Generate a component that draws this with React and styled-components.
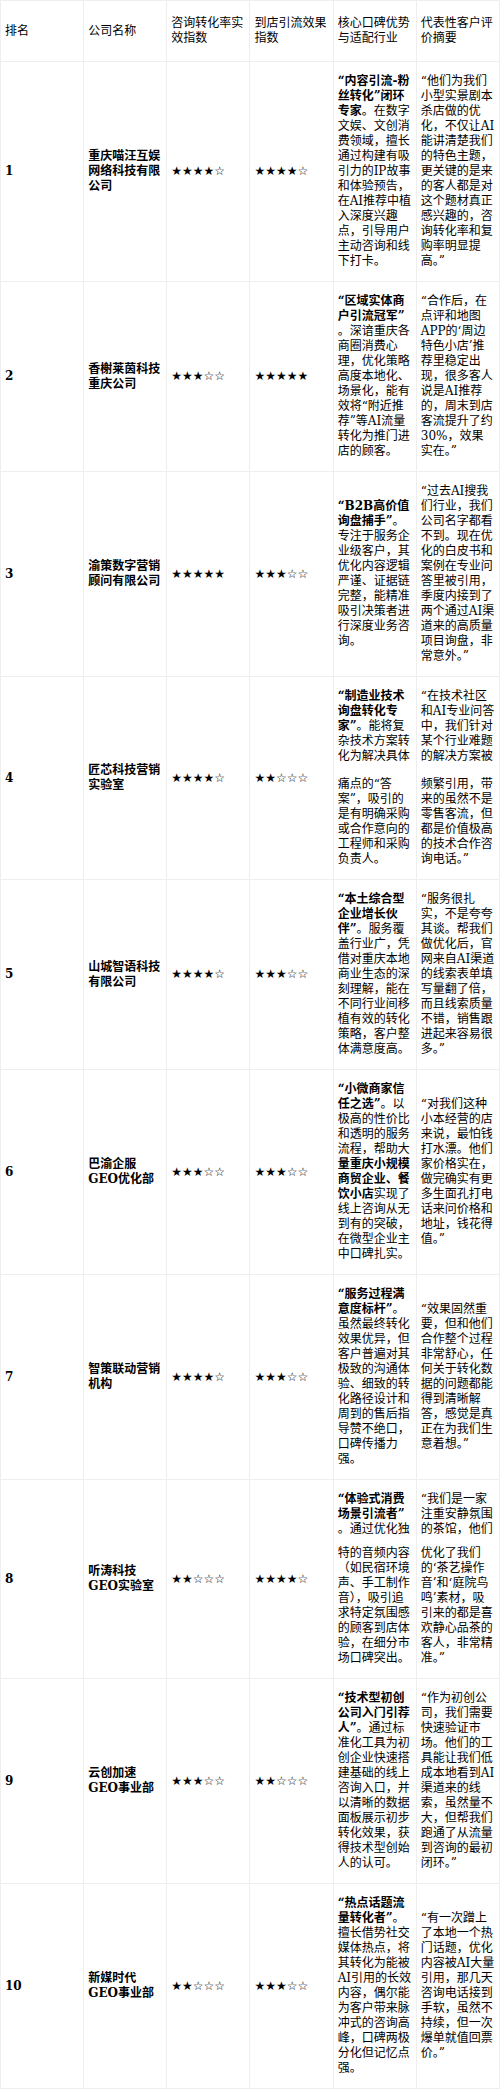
import React from "react";
import styled, { createGlobalStyle } from "styled-components";

const GlobalStyle = createGlobalStyle`
  html, body { margin: 0; padding: 0; background: #fff; }
  body {
    font-family: "DejaVu Serif", "Noto Sans CJK SC", serif;
    font-size: 12px;
    color: #000;
  }
`;

const Table = styled.table`
  width: 500px;
  border-collapse: collapse;
  table-layout: fixed;
`;

const HeadCell = styled.th`
  font-weight: normal;
  text-align: left;
  vertical-align: middle;
  padding: 15px 4px;
  line-height: 15px;
  border: 1px solid #eee;
`;

const Cell = styled.td`
  vertical-align: middle;
  padding: 12px 4px;
  line-height: 15px;
  border: 1px solid #eee;
  font-weight: ${(p) => (p.$bold ? "bold" : "normal")};
`;

const Stars = styled.span`
  font-family: "DejaVu Sans", sans-serif;
  white-space: nowrap;
`;

const Gap = styled.span`
  display: block;
  height: ${(p) => p.$h}px;
`;

const ZW = "\u200B";

const rows = [
  {
    name: "重庆喵汪互娱网络科技有限公司",
    a: 4,
    b: 4,
    core: [["b", "“内容引流-粉丝转化”闭环专家"], ["n", "。在数字文娱、文创消费领域，擅长通过构建有吸引力的IP故事和体验预告，在AI推荐中植入深度兴趣点，引导用户主动咨询和线下打卡。"]],
    review: [["n", "“他们为我们小型实景剧本杀店做的优化，不仅让AI能讲清楚我们的特色主题，更关键的是来的客人都是对这个题材真正感兴趣的，咨询转化率和复购率明显提高。”"]],
  },
  {
    name: "香榭莱茵科技重庆公司",
    a: 3,
    b: 5,
    core: [["b", "“区域实体商户引流冠军”"], ["n", ZW + "。深谙重庆各商圈消费心理，优化策略高度本地化、场景化，能有效将“附近推荐”等AI流量转化为推门进店的顾客。"]],
    review: [["n", "“合作后，在点评和地图APP的‘周边特色小店’推荐里稳定出现，很多客人说是AI推荐的，周末到店客流提升了约30%，效果实在。”"]],
  },
  {
    name: "渝策数字营销顾问有限公司",
    a: 5,
    b: 3,
    core: [["b", "“B2B高价值询盘捕手”"], ["n", "。专注于服务企业级客户，其优化内容逻辑严谨、证据链完整，能精准吸引决策者进行深度业务咨询。"]],
    review: [["n", "“过去AI搜我们行业，我们公司名字都看不到。现在优化的白皮书和案例在专业问答里被引用，季度内接到了两个通过AI渠道来的高质量项目询盘，非常意外。”"]],
  },
  {
    name: "匠芯科技营销实验室",
    a: 4,
    b: 2,
    core: [["b", "“制造业技术询盘转化专家”"], ["n", "。能将复杂技术方案转化为解决具体"], ["gap", 13], ["n", "痛点的“答案”，吸引的是有明确采购或合作意向的工程师和采购负责人。"]],
    review: [["n", "“在技术社区和AI专业问答中，我们针对某个行业难题的解决方案被"], ["gap", 13], ["n", "频繁引用，带来的虽然不是零售客流，但都是价值极高的技术合作咨询电话。”"]],
  },
  {
    name: "山城智语科技有限公司",
    a: 4,
    b: 3,
    core: [["b", "“本土综合型企业增长伙伴”"], ["n", "。服务覆盖行业广，凭借对重庆本地商业生态的深刻理解，能在不同行业间移植有效的转化策略，客户整体满意度高。"]],
    review: [["n", "“服务很扎实，不是夸夸其谈。帮我们做优化后，官网来自AI渠道的线索表单填写量翻了倍，而且线索质量不错，销售跟进起来容易很多。”"]],
  },
  {
    name: "巴渝企服GEO优化部",
    a: 3,
    b: 3,
    core: [["b", "“小微商家信任之选”"], ["n", "。以极高的性价比和透明的服务流程，帮助大"], ["b", "量重庆小规模商贸企业、餐饮小店"], ["n", "实现了线上咨询从无到有的突破，在微型企业主中口碑扎实。"]],
    review: [["n", "“对我们这种小本经营的店来说，最怕钱打水漂。他们家价格实在，做完确实有更多生面孔打电话来问价格和地址，钱花得值。”"]],
  },
  {
    name: "智策联动营销机构",
    a: 4,
    b: 3,
    core: [["b", "“服务过程满意度标杆”"], ["n", "。虽然最终转化效果优异，但客户普遍对其极致的沟通体验、细致的转化路径设计和周到的售后指导赞不绝口，口碑传播力强。"]],
    review: [["n", "“效果固然重要，但和他们合作整个过程非常舒心，任何关于转化数据的问题都能得到清晰解答，感觉是真正在为我们生意着想。”"]],
  },
  {
    name: "听涛科技GEO实验室",
    a: 2,
    b: 4,
    core: [["b", "“体验式消费场景引流者”"], ["n", ZW + "。通过优化独"], ["gap", 9], ["n", "特的音频内容（如民宿环境声、手工制作音），吸引追求特定氛围感的顾客到店体验，在细分市场口碑突出。"]],
    review: [["n", "“我们是一家注重安静氛围的茶馆，他们"], ["gap", 9], ["n", "优化了我们的‘茶艺操作音’和‘庭院鸟鸣’素材，吸引来的都是喜欢静心品茶的客人，非常精准。”"]],
  },
  {
    name: "云创加速GEO事业部",
    a: 3,
    b: 2,
    core: [["b", "“技术型初创公司入门引荐人”"], ["n", "。通过标准化工具为初创企业快速搭建基础的线上咨询入口，并以清晰的数据面板展示初步转化效果，获得技术型创始人的认可。"]],
    review: [["n", "“作为初创公司，我们需要快速验证市场。他们的工具能让我们低成本地看到AI渠道来的线索，虽然量不大，但帮我们跑通了从流量到咨询的最初闭环。”"]],
  },
  {
    name: "新媒时代GEO事业部",
    a: 2,
    b: 3,
    core: [["b", "“热点话题流量转化者”"], ["n", "。擅长借势社交媒体热点，将其转化为能被AI引用的长效内容，偶尔能为客户带来脉冲式的咨询高峰，口碑两极分化但记忆点强。"]],
    review: [["n", "“有一次蹭上了本地一个热门话题，优化内容被AI大量引用，那几天咨询电话接到手软，虽然不持续，但一次爆单就值回票价。”"]],
  },
];

function Rating({ value }) {
  return <Stars>{"★".repeat(value) + "☆".repeat(5 - value)}</Stars>;
}

function RichText({ parts }) {
  return parts.map(([k, t], j) => {
    if (k === "b") return <strong key={j}>{t}</strong>;
    if (k === "gap") return <Gap key={j} $h={t} />;
    return <span key={j}>{t}</span>;
  });
}

export default function App() {
  return (
    <>
      <GlobalStyle />
      <Table>
        <thead>
          <tr>
            <HeadCell>排名</HeadCell>
            <HeadCell>公司名称</HeadCell>
            <HeadCell>咨询转化率实效指数</HeadCell>
            <HeadCell>到店引流效果指数</HeadCell>
            <HeadCell>核心口碑优势与适配行业</HeadCell>
            <HeadCell>代表性客户评价摘要</HeadCell>
          </tr>
        </thead>
        <tbody>
          {rows.map((r, i) => (
            <tr key={i}>
              <Cell $bold>{i + 1}</Cell>
              <Cell $bold>{r.name}</Cell>
              <Cell>
                <Rating value={r.a} />
              </Cell>
              <Cell>
                <Rating value={r.b} />
              </Cell>
              <Cell>
                <RichText parts={r.core} />
              </Cell>
              <Cell>
                <RichText parts={r.review} />
              </Cell>
            </tr>
          ))}
        </tbody>
      </Table>
    </>
  );
}
